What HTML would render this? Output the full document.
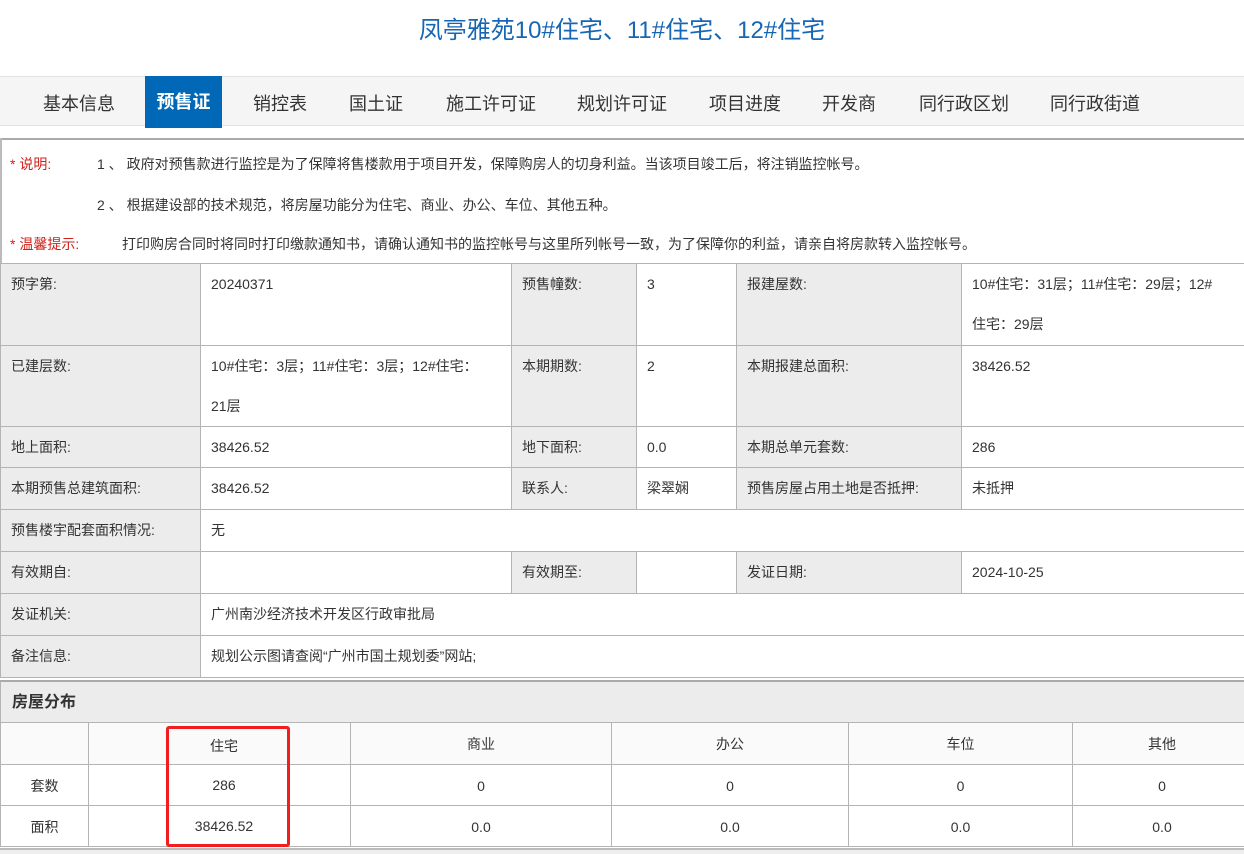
<!DOCTYPE html>
<html><head><meta charset="utf-8"><style>
*{margin:0;padding:0;box-sizing:border-box}
body{width:1244px;height:854px;overflow:hidden;background:#fff;font-family:"Liberation Sans","Microsoft YaHei","Noto Sans CJK SC",sans-serif;font-size:14px;color:#333;position:relative}
.a{position:absolute}
.t{left:0;width:1244px;top:10px;text-align:center;font-size:24px;color:#1766b3}
.nav{left:0;top:76px;width:1244px;height:50px;background:#f5f5f5;border-top:1px solid #e2e2e2;border-bottom:1px solid #e2e2e2}
.nv{top:90px;font-size:18px;color:#333}
.act{left:145px;top:76px;width:77px;height:52px;background:#0068b7;color:#fff;font-weight:bold;font-size:18px;text-align:center;line-height:52px}
.c{position:absolute;border:1px solid #b4b4b4;padding:0 10px;line-height:40px;}
.l{background:#ececec}
.r{color:#d0201a}
.d{position:absolute;border:1px solid #b4b4b4;text-align:center;line-height:42px;}
</style></head><body>
<div class="a t">凤亭雅苑10#住宅、11#住宅、12#住宅</div>
<div class="a nav"></div>
<div class="a nv" style="left:43px">基本信息</div>
<div class="a act">预售证</div>
<div class="a nv" style="left:253px">销控表</div>
<div class="a nv" style="left:349px">国土证</div>
<div class="a nv" style="left:446px">施工许可证</div>
<div class="a nv" style="left:577px">规划许可证</div>
<div class="a nv" style="left:709px">项目进度</div>
<div class="a nv" style="left:822px">开发商</div>
<div class="a nv" style="left:919px">同行政区划</div>
<div class="a nv" style="left:1050px">同行政街道</div>
<div class="a" style="left:0;top:138px;width:1244px;height:2px;background:#aaa"></div>
<div class="a" style="left:0;top:138px;width:2px;height:130px;background:#bbb"></div>
<div class="a" style="left:10px;top:154px"><span class="r">* 说明:</span></div>
<div class="a" style="left:97px;top:154px">1 、 政府对预售款进行监控是为了保障将售楼款用于项目开发，保障购房人的切身利益。当该项目竣工后，将注销监控帐号。</div>
<div class="a" style="left:97px;top:195px">2 、 根据建设部的技术规范，将房屋功能分为住宅、商业、办公、车位、其他五种。</div>
<div class="a" style="left:10px;top:234px"><span class="r">* 温馨提示:</span></div>
<div class="a" style="left:122px;top:234px">打印购房合同时将同时打印缴款通知书，请确认通知书的监控帐号与这里所列帐号一致，为了保障你的利益，请亲自将房款转入监控帐号。</div>

<div class="c l" style="left:0;top:263px;width:201px;height:83px">预字第:</div>
<div class="c" style="left:200px;top:263px;width:312px;height:83px">20240371</div>
<div class="c l" style="left:511px;top:263px;width:126px;height:83px">预售幢数:</div>
<div class="c" style="left:636px;top:263px;width:101px;height:83px">3</div>
<div class="c l" style="left:736px;top:263px;width:226px;height:83px">报建屋数:</div>
<div class="c" style="left:961px;top:263px;width:290px;height:83px">10#住宅：31层；11#住宅：29层；12#<br>住宅：29层</div>

<div class="c l" style="left:0;top:345px;width:201px;height:82px">已建层数:</div>
<div class="c" style="left:200px;top:345px;width:312px;height:82px">10#住宅：3层；11#住宅：3层；12#住宅：<br>21层</div>
<div class="c l" style="left:511px;top:345px;width:126px;height:82px">本期期数:</div>
<div class="c" style="left:636px;top:345px;width:101px;height:82px">2</div>
<div class="c l" style="left:736px;top:345px;width:226px;height:82px">本期报建总面积:</div>
<div class="c" style="left:961px;top:345px;width:290px;height:82px">38426.52</div>

<div class="c l" style="left:0;top:426px;width:201px;height:42px">地上面积:</div>
<div class="c" style="left:200px;top:426px;width:312px;height:42px">38426.52</div>
<div class="c l" style="left:511px;top:426px;width:126px;height:42px">地下面积:</div>
<div class="c" style="left:636px;top:426px;width:101px;height:42px">0.0</div>
<div class="c l" style="left:736px;top:426px;width:226px;height:42px">本期总单元套数:</div>
<div class="c" style="left:961px;top:426px;width:290px;height:42px">286</div>

<div class="c l" style="left:0;top:467px;width:201px;height:43px">本期预售总建筑面积:</div>
<div class="c" style="left:200px;top:467px;width:312px;height:43px">38426.52</div>
<div class="c l" style="left:511px;top:467px;width:126px;height:43px">联系人:</div>
<div class="c" style="left:636px;top:467px;width:101px;height:43px">梁翠娴</div>
<div class="c l" style="left:736px;top:467px;width:226px;height:43px">预售房屋占用土地是否抵押:</div>
<div class="c" style="left:961px;top:467px;width:290px;height:43px">未抵押</div>

<div class="c l" style="left:0;top:509px;width:201px;height:43px">预售楼宇配套面积情况:</div>
<div class="c" style="left:200px;top:509px;width:1051px;height:43px">无</div>

<div class="c l" style="left:0;top:551px;width:201px;height:43px">有效期自:</div>
<div class="c" style="left:200px;top:551px;width:312px;height:43px"></div>
<div class="c l" style="left:511px;top:551px;width:126px;height:43px">有效期至:</div>
<div class="c" style="left:636px;top:551px;width:101px;height:43px"></div>
<div class="c l" style="left:736px;top:551px;width:226px;height:43px">发证日期:</div>
<div class="c" style="left:961px;top:551px;width:290px;height:43px">2024-10-25</div>

<div class="c l" style="left:0;top:593px;width:201px;height:43px">发证机关:</div>
<div class="c" style="left:200px;top:593px;width:1051px;height:43px">广州南沙经济技术开发区行政审批局</div>
<div class="c l" style="left:0;top:635px;width:201px;height:43px">备注信息:</div>
<div class="c" style="left:200px;top:635px;width:1051px;height:43px">规划公示图请查阅“广州市国土规划委”网站;</div>

<div class="a" style="left:0;top:680px;width:1251px;height:43px;background:#ececec;border:1px solid #b4b4b4;border-top:2px solid #aaa;padding-left:11px;line-height:42px;font-weight:bold;font-size:16px">房屋分布</div>

<div class="d" style="left:0;top:722px;width:89px;height:43px;background:#fafafa"></div>
<div class="d" style="left:88px;top:722px;width:263px;height:43px;background:#fafafa"></div>
<div class="a" style="left:166px;top:736px;width:116px;text-align:center">住宅</div>
<div class="d" style="left:350px;top:722px;width:262px;height:43px;background:#fafafa">商业</div>
<div class="d" style="left:611px;top:722px;width:238px;height:43px;background:#fafafa">办公</div>
<div class="d" style="left:848px;top:722px;width:225px;height:43px;background:#fafafa">车位</div>
<div class="d" style="left:1072px;top:722px;width:180px;height:43px;background:#fafafa">其他</div>

<div class="d" style="left:0;top:764px;width:89px;height:42px">套数</div>
<div class="d" style="left:88px;top:764px;width:263px;height:42px"></div>
<div class="a" style="left:166px;top:777px;width:116px;text-align:center">286</div>
<div class="d" style="left:350px;top:764px;width:262px;height:42px">0</div>
<div class="d" style="left:611px;top:764px;width:238px;height:42px">0</div>
<div class="d" style="left:848px;top:764px;width:225px;height:42px">0</div>
<div class="d" style="left:1072px;top:764px;width:180px;height:42px">0</div>

<div class="d" style="left:0;top:805px;width:89px;height:42px">面积</div>
<div class="d" style="left:88px;top:805px;width:263px;height:42px"></div>
<div class="a" style="left:166px;top:818px;width:116px;text-align:center">38426.52</div>
<div class="d" style="left:350px;top:805px;width:262px;height:42px">0.0</div>
<div class="d" style="left:611px;top:805px;width:238px;height:42px">0.0</div>
<div class="d" style="left:848px;top:805px;width:225px;height:42px">0.0</div>
<div class="d" style="left:1072px;top:805px;width:180px;height:42px">0.0</div>
<div class="a" style="left:0;top:848px;width:1244px;height:6px;background:#eee;border-top:2px solid #bbb"></div>
<div class="a" style="left:166px;top:726px;width:124px;height:121px;border:3px solid #f21d1d;border-radius:3px"></div>
</body></html>
